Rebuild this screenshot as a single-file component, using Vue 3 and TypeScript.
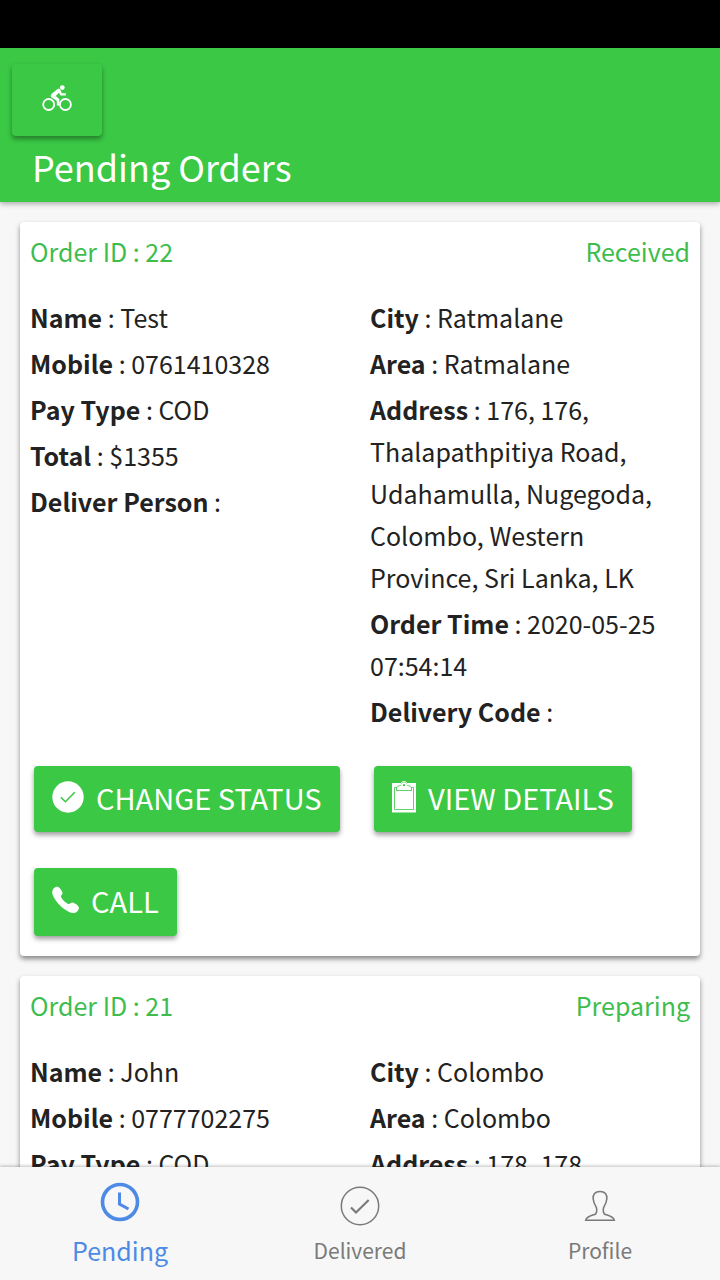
<script setup lang="ts">
import { ref } from 'vue'

interface Field {
  label: string
  value: string
}

interface Order {
  id: number
  status: string
  summary: Field[]
  delivery: Field[]
}

const orders: Order[] = [
  {
    id: 22,
    status: 'Received',
    summary: [
      { label: 'Name', value: 'Test' },
      { label: 'Mobile', value: '0761410328' },
      { label: 'Pay Type', value: 'COD' },
      { label: 'Total', value: '$1355' },
      { label: 'Deliver Person', value: '' },
    ],
    delivery: [
      { label: 'City', value: 'Ratmalane' },
      { label: 'Area', value: 'Ratmalane' },
      {
        label: 'Address',
        value:
          '176, 176, Thalapathpitiya Road, Udahamulla, Nugegoda, Colombo, Western Province, Sri Lanka, LK',
      },
      { label: 'Order Time', value: '2020-05-25 07:54:14' },
      { label: 'Delivery Code', value: '' },
    ],
  },
  {
    id: 21,
    status: 'Preparing',
    summary: [
      { label: 'Name', value: 'John' },
      { label: 'Mobile', value: '0777702275' },
      { label: 'Pay Type', value: 'COD' },
    ],
    delivery: [
      { label: 'City', value: 'Colombo' },
      { label: 'Area', value: 'Colombo' },
      { label: 'Address', value: '178, 178,' },
    ],
  },
]

type Tab = 'pending' | 'delivered' | 'profile'
const tab = ref<Tab>('pending')
</script>

<template>
  <div class="screen">
    <div class="status-bar"></div>
    <header class="header">
      <button class="btn bike" type="button" aria-label="Deliveries">
        <svg width="30" height="28" viewBox="0 0 30 28" fill="none" stroke="#fff">
          <circle cx="6.7" cy="20.5" r="5.5" stroke-width="1.8" />
          <circle cx="23.4" cy="20.5" r="5.5" stroke-width="1.8" />
          <circle cx="20.3" cy="3.6" r="2.4" fill="#fff" stroke="none" />
          <path d="M15.5 5c1.4-.6 2.5-.2 3 1l1.3 3.200h4v2.200h-5.300l-1.600-2.600-3.100 3.200 3.600 3v6.500h-2.600v-4.800L9.600 13.500c-1.100-.9-1.100-2.300-.1-3.400z" fill="#fff" stroke="none" />
        </svg>
      </button>
      <h1 class="title">Pending Orders</h1>
    </header>

    <main class="content">
      <article v-for="order in orders" :key="order.id" class="card">
        <div class="card-head">
          <span>Order ID : {{ order.id }}</span>
          <span>{{ order.status }}</span>
        </div>
        <div class="details">
          <div class="fields">
            <p v-for="f in order.summary" :key="f.label"><b>{{ f.label }}</b> : {{ f.value }}</p>
          </div>
          <div class="fields">
            <p v-for="f in order.delivery" :key="f.label"><b>{{ f.label }}</b> : {{ f.value }}</p>
          </div>
        </div>
        <div class="actions">
          <button class="btn" type="button">
            <svg width="32" height="32" viewBox="0 0 32 32">
              <circle cx="16" cy="16" r="15.7" fill="#fff" />
              <path d="M8.8 16.2l4.6 4.5 9.4-9.5" fill="none" stroke="#3ac845" stroke-width="1.6" />
            </svg>
            CHANGE STATUS
          </button>
          <button class="btn" type="button">
            <svg width="24" height="32" viewBox="0 0 24 32">
              <path d="M0 2h24v29.5H0z" fill="#fff" />
              <path d="M5 6.5H2.5v22h19v-22H19" fill="none" stroke="#3ac845" stroke-width="0.8" />
              <path d="M4.5 9.5h15V7c0-1.6-1.5-2-4-2.5 0-2-1.5-3.5-3.5-3.5S8.500 2.500 8.500 4.500C6 5 4.500 5.400 4.500 7z" fill="#fff" stroke="#3ac845" stroke-width="0.8" />
              <path d="M8.5 4c0-2 1.5-3.5 3.5-3.5S15.500 2 15.500 4" fill="none" stroke="#fff" />
              <circle cx="12" cy="4.2" r="1.1" fill="#3ac845" />
            </svg>
            VIEW DETAILS
          </button>
          <button class="btn" type="button">
            <svg width="27" height="28" viewBox="0 0 27 28">
              <path d="M1.6 2.500C3.500.4 6 .1 7.600 2c1.500 1.800 3 3.800 2.900 5.200-.1 1.700-2 2-1.500 3.500.7 2.300 4.800 6.300 7.400 7.300 1.700.6 2-1.400 3.800-1.400 1.600 0 3.700 1.400 5.500 2.900 1.800 1.600 1.500 4.200-.6 6-2 1.800-4.700 2.100-8 .6C11.500 23.500 3.500 16 1 9.800-.2 6.800 0 4.300 1.600 2.500z" fill="#fff" />
            </svg>
            CALL
          </button>
        </div>
      </article>
    </main>

    <nav class="tabs">
      <button class="tab" :class="{ active: tab === 'pending' }" type="button" @click="tab = 'pending'">
        <svg width="40" height="40" viewBox="0 0 40 40" fill="none" stroke="currentColor">
          <circle cx="20" cy="20" r="17.5" stroke-width="3.6" />
          <path d="M19.5 10.5v11.5l9 5" stroke-width="3" />
        </svg>
        <span>Pending</span>
      </button>
      <button class="tab" :class="{ active: tab === 'delivered' }" type="button" @click="tab = 'delivered'">
        <svg width="40" height="40" viewBox="0 0 40 40" fill="none" stroke="currentColor">
          <circle cx="20" cy="20" r="18.7" stroke-width="1.5" />
          <path d="M11 21.5l5 5L28.7 14" stroke-width="2.2" />
        </svg>
        <span>Delivered</span>
      </button>
      <button class="tab" :class="{ active: tab === 'profile' }" type="button" @click="tab = 'profile'">
        <svg width="40" height="40" viewBox="0 0 40 40" fill="none" stroke="currentColor">
          <path d="M20 5.500c-5 0-7.300 3-6.800 7.500.3 3.500 1.500 5.500 2.900 7.800.8 1.400 1 5.700-.4 7-1.700 1.500-9.200 1.900-10 6.500h28.600c-.8-4.600-8.300-5-10-6.500-1.400-1.300-1.200-5.600-.4-7 1.400-2.300 2.600-4.300 2.900-7.800.5-4.500-1.800-7.500-6.800-7.500z" stroke-width="1.6" />
        </svg>
        <span>Profile</span>
      </button>
    </nav>
  </div>
</template>

<style scoped>
.screen {
  height: 100vh;
  display: flex;
  flex-direction: column;
  overflow: hidden;
  background: #f7f7f7;
  color: #222;
  font-family: 'Noto Sans CJK SC', 'Noto Sans', sans-serif;
  font-size: 25px;
  line-height: 42px;
}
.status-bar {
  flex: none;
  height: 48px;
  background: #000;
}
.header {
  flex: none;
  position: relative;
  z-index: 1;
  padding: 16px 12px 8px;
  background: #3ac845;
  box-shadow: 0 2px 5px rgba(0, 0, 0, 0.3);
}
.title {
  margin: 2px 20px 0;
  color: #fff;
  font-size: 36px;
  font-weight: 400;
  line-height: 56px;
}
.btn {
  display: flex;
  align-items: center;
  gap: 12px;
  min-height: 66px;
  padding: 0 18px 4px;
  border: 0;
  border-radius: 4px;
  background: #3ac845;
  box-shadow: 0 3px 5px rgba(0, 0, 0, 0.38);
  color: #fff;
  font: inherit;
  font-size: 29px;
  white-space: nowrap;
}
.btn svg {
  flex: none;
}
.bike {
  justify-content: center;
  width: 90px;
  min-height: 72px;
}
.content {
  flex: 1;
  min-height: 0;
  overflow-y: auto;
  scrollbar-width: none;
  padding: 20px;
}
.card {
  margin-bottom: 20px;
  padding: 8px 10px 20px;
  border-radius: 4px;
  background: #fff;
  box-shadow: 0 3px 5px rgba(0, 0, 0, 0.45);
}
.card-head {
  display: flex;
  justify-content: space-between;
  margin-bottom: 24px;
  color: #3ebd4e;
}
.details,
.actions {
  display: grid;
  grid-template-columns: 1fr 1fr;
  gap: 20px;
}
.fields p {
  margin: 0 0 4px;
}
.fields b {
  font-weight: 700;
}
.actions {
  grid-template-rows: 66px 68px;
  justify-items: start;
  row-gap: 36px;
  margin-top: 30px;
}
.actions .btn {
  margin: 0 4px;
}
.tabs {
  flex: none;
  display: grid;
  grid-template-columns: 1fr 1fr 1fr;
  position: relative;
  height: 113px;
  background: #f7f7f7;
  box-shadow: 0 -1px 3px rgba(0, 0, 0, 0.25);
}
.tab {
  display: flex;
  flex-direction: column;
  align-items: center;
  justify-content: flex-end;
  gap: 6px;
  padding: 0 0 12px;
  border: 0;
  background: none;
  color: #7a7a7a;
  font: inherit;
  font-size: 21px;
  line-height: 36px;
}
.tab.active {
  gap: 10px;
  color: #4d8ae6;
  font-size: 25px;
}
</style>
